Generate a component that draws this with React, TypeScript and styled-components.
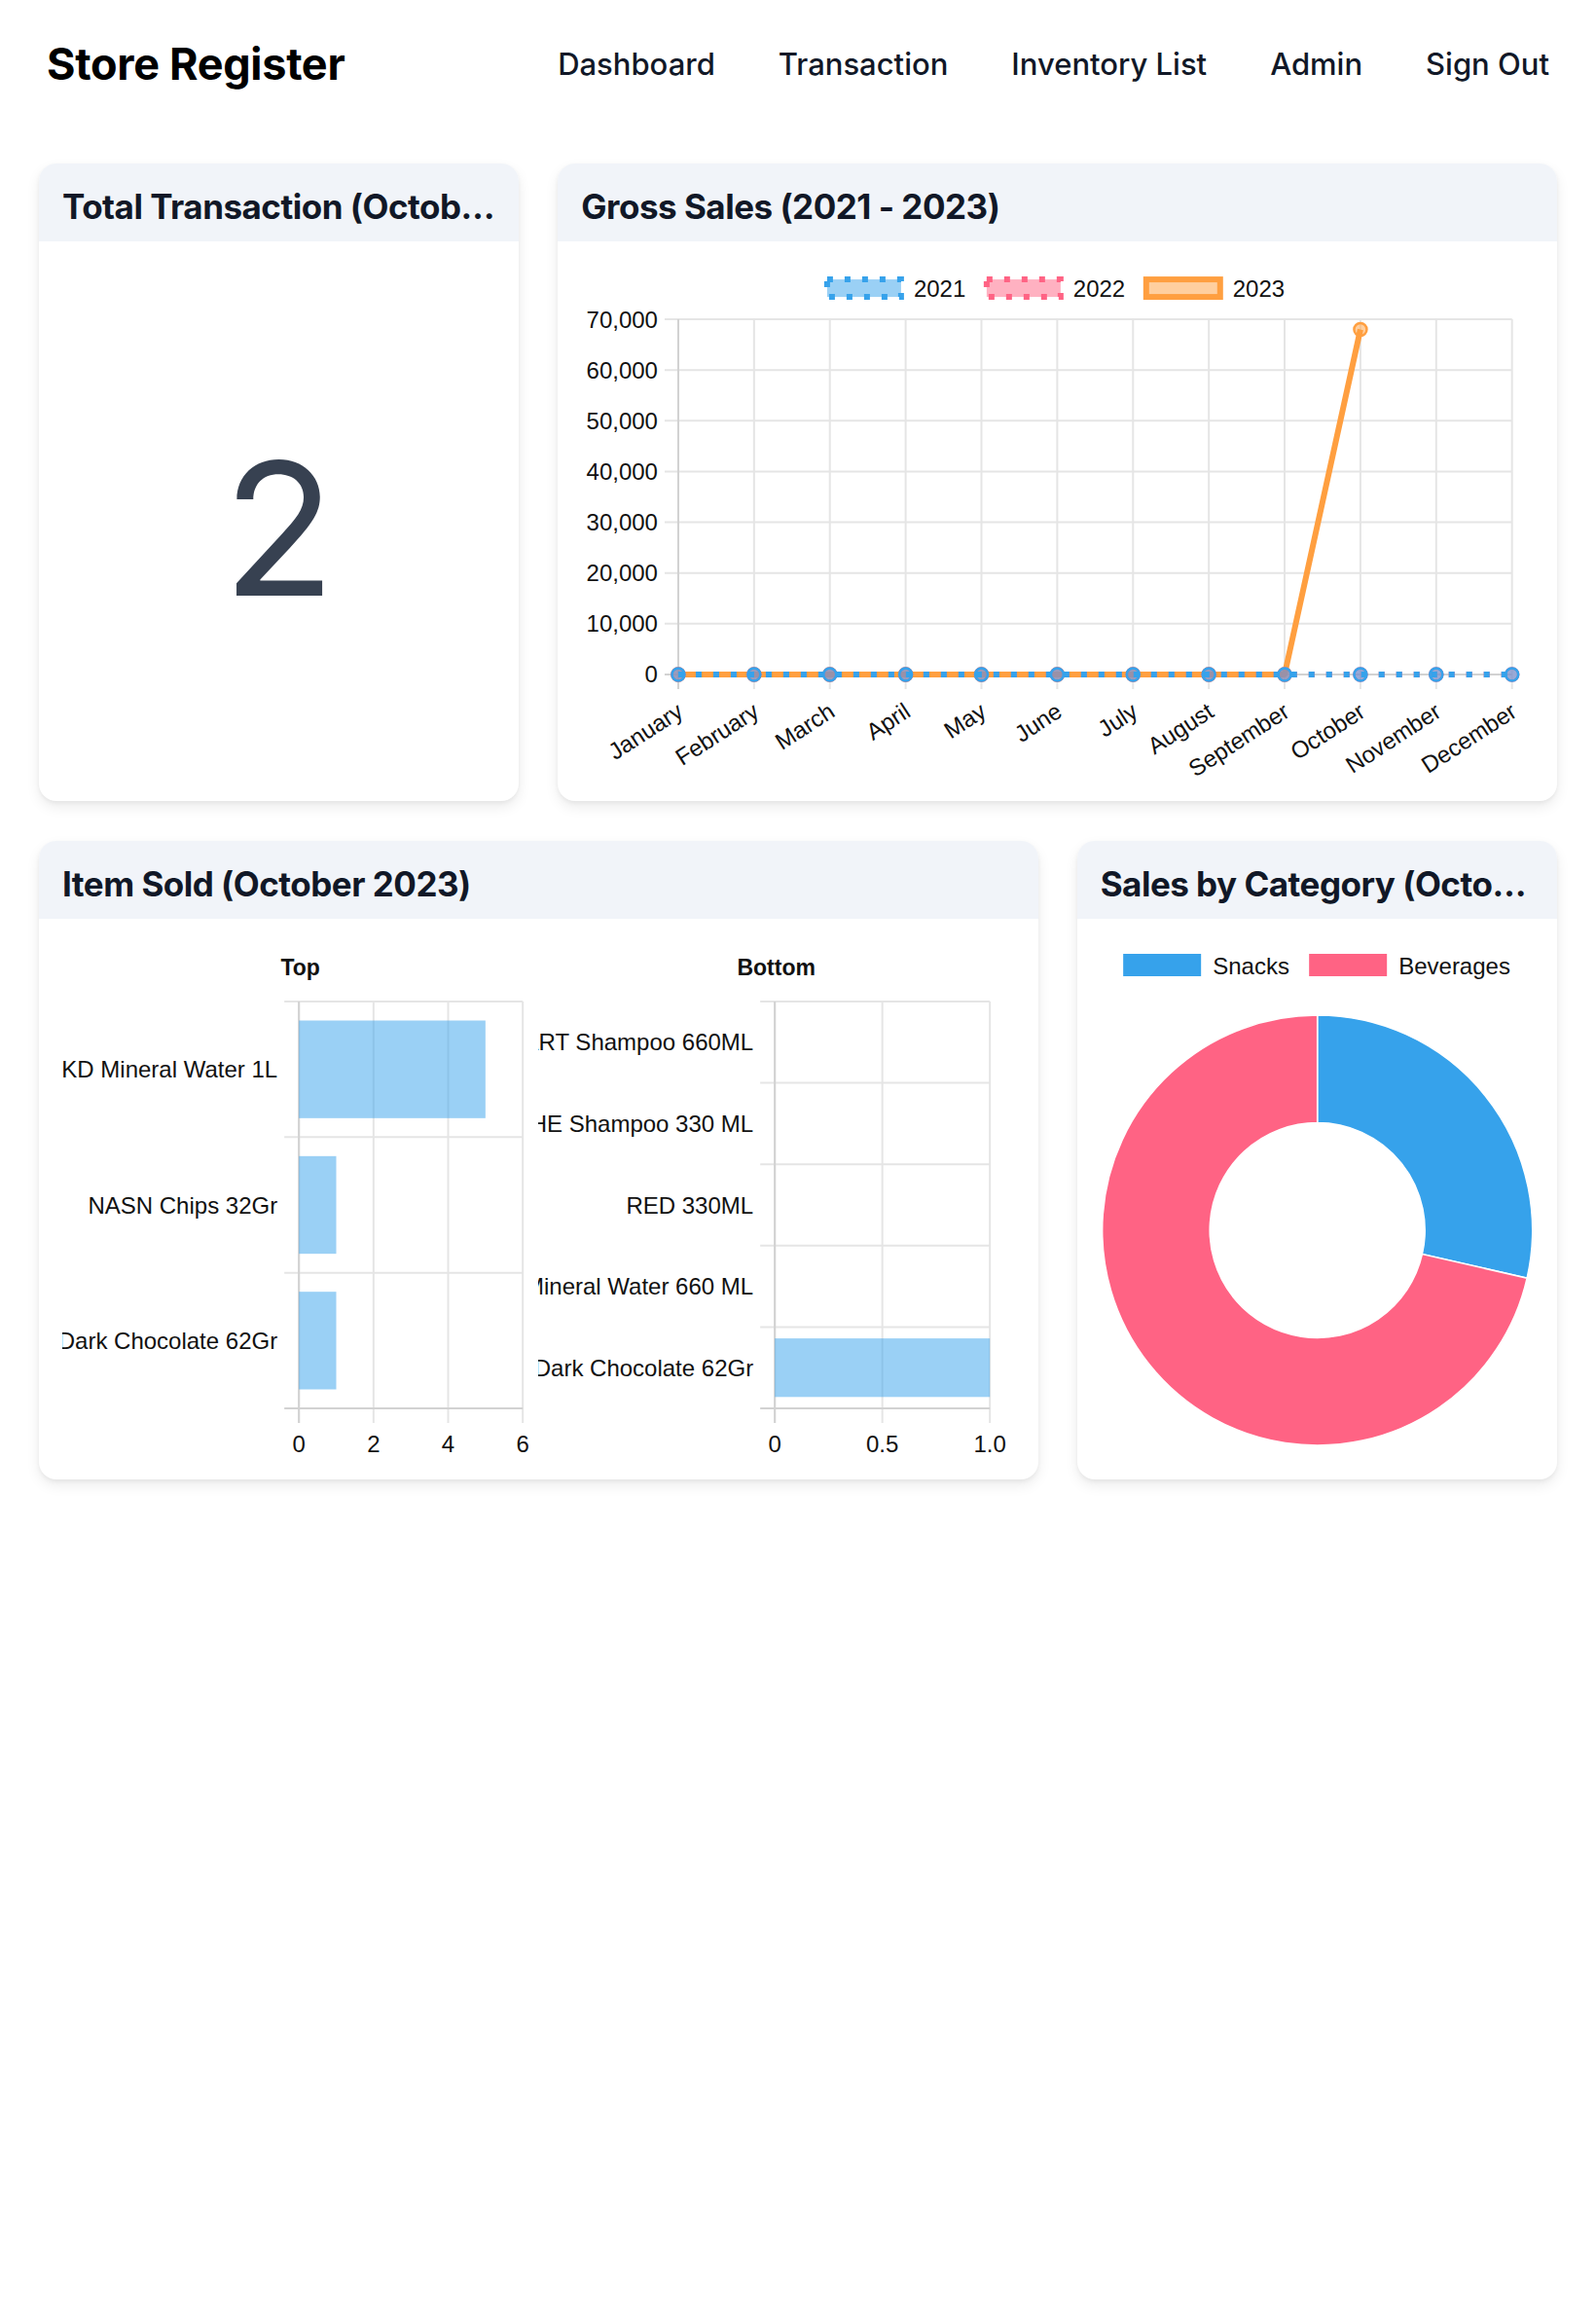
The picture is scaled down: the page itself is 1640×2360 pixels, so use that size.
import React from "react";
import styled, { createGlobalStyle } from "styled-components";

const CHART_FONT = `"Liberation Sans", Arial, Helvetica, sans-serif`;
const TEXT = "#111";
const GRID = "#e5e5e5";
const BORDER = "#d2d2d2";

const BLUE = "#36a2eb";
const BLUE_FILL = "rgba(54,162,235,0.5)";
const PINK = "#ff6384";
const PINK_FILL = "rgba(255,99,132,0.5)";
const ORANGE = "#ff9f40";
const ORANGE_FILL = "rgba(255,159,64,0.5)";

const GlobalStyle = createGlobalStyle`
  html, body {
    margin: 0;
    padding: 0;
    background: #ffffff;
  }
  body {
    font-family: Inter, "Noto Sans", Arial, sans-serif;
    color: #111827;
    -webkit-font-smoothing: antialiased;
  }
`;

const Page = styled.div`
  width: 1640px;
  min-height: 2360px;
  box-sizing: border-box;
`;

const TopBar = styled.header`
  height: 131px;
  padding: 0 48px;
  box-sizing: border-box;
  display: flex;
  align-items: center;
  justify-content: space-between;
`;

const Brand = styled.h1`
  margin: 0;
  font-size: 45px;
  line-height: 54px;
  font-weight: 700;
  letter-spacing: -0.3px;
  color: #000;
`;

const Nav = styled.nav`
  display: flex;
  align-items: center;
  gap: 65px;
`;

const NavLink = styled.a`
  font-size: 31px;
  line-height: 40px;
  font-weight: 500;
  color: #111827;
  text-decoration: none;
`;

const Grid = styled.main`
  display: grid;
  grid-template-columns: repeat(3, minmax(0, 1fr));
  column-gap: 40px;
  row-gap: 41px;
  padding: 37px 40px 0;
`;

const Card = styled.section<{ $span?: number }>`
  grid-column: span ${(p) => p.$span ?? 1};
  background: #fff;
  border-radius: 18px;
  overflow: hidden;
  display: flex;
  flex-direction: column;
  box-shadow: 0 6px 14px rgba(0, 0, 0, 0.08), 0 2px 4px rgba(0, 0, 0, 0.05);
`;

const CardHeader = styled.div`
  height: 80px;
  box-sizing: border-box;
  padding: 20px 24px 12px;
  background: #f1f4f9;
  display: flex;
  align-items: center;
`;

const CardTitle = styled.h2`
  margin: 0;
  min-width: 0;
  font-size: 35px;
  line-height: 48px;
  font-weight: 700;
  letter-spacing: -0.5px;
  color: #111827;
  white-space: nowrap;
  overflow: hidden;
  text-overflow: ellipsis;
`;

const CardBody = styled.div<{ $padX?: number }>`
  flex: 1;
  padding: 0 ${(p) => p.$padX ?? 0}px;
  display: flex;
`;

const CenterBody = styled.div`
  flex: 1;
  display: flex;
  align-items: center;
  justify-content: center;
  padding-top: 14px;
`;

const BigNumber = styled.div`
  font-size: 190px;
  line-height: 1;
  font-weight: 400;
  color: #374151;
`;

const SplitCharts = styled.div`
  flex: 1;
  display: grid;
  grid-template-columns: 1fr 1fr;
`;

const ChartSvg = styled.svg`
  display: block;
  width: 100%;
  font-family: ${CHART_FONT};
  overflow: hidden;
`;

const ChartText = styled.text<{ $bold?: boolean; $size?: number }>`
  font-size: ${(p) => p.$size ?? 24}px;
  font-weight: ${(p) => (p.$bold ? 700 : 400)};
  fill: ${TEXT};
`;

/* ---------------- Line chart ---------------- */

const MONTHS = [
  "January",
  "February",
  "March",
  "April",
  "May",
  "June",
  "July",
  "August",
  "September",
  "October",
  "November",
  "December",
];

type Series = {
  label: string;
  color: string;
  fill: string;
  dash?: string;
  data: (number | null)[];
};

const SERIES: Series[] = [
  { label: "2021", color: BLUE, fill: BLUE_FILL, dash: "6 12", data: Array(12).fill(0) },
  { label: "2022", color: PINK, fill: PINK_FILL, dash: "6 12", data: Array(12).fill(0) },
  {
    label: "2023",
    color: ORANGE,
    fill: ORANGE_FILL,
    data: [0, 0, 0, 0, 0, 0, 0, 0, 0, 68000, null, null],
  },
];

function GrossSalesChart() {
  const W = 1027;
  const H = 575;
  const pL = 124;
  const pR = 981;
  const pT = 80;
  const pB = 445;
  const max = 70000;
  const xAt = (i: number) => pL + (i * (pR - pL)) / 11;
  const yAt = (v: number) => pB - (v / max) * (pB - pT);
  const yTicks = [0, 10000, 20000, 30000, 40000, 50000, 60000, 70000];

  const legendStart = 274;
  const legendStep = 164;

  const drawOrder = [...SERIES].reverse();

  return (
    <ChartSvg viewBox={`0 0 ${W} ${H}`} height={H}>
      {SERIES.map((s, i) => {
        const x = legendStart + i * legendStep;
        return (
          <g key={s.label}>
            <rect
              x={x + 3}
              y={39}
              width={76}
              height={18}
              fill={s.fill}
              stroke={s.color}
              strokeWidth={6}
              strokeDasharray={s.dash}
            />
            <ChartText x={x + 92} y={48} dominantBaseline="central">
              {s.label}
            </ChartText>
          </g>
        );
      })}

      {yTicks.map((t) => (
        <g key={t}>
          <line x1={pL - 14} x2={pR} y1={yAt(t)} y2={yAt(t)} stroke={GRID} strokeWidth={2} />
          <ChartText x={103} y={yAt(t)} textAnchor="end" dominantBaseline="central">
            {t.toLocaleString("en-US")}
          </ChartText>
        </g>
      ))}

      {MONTHS.map((m, i) => (
        <g key={m}>
          <line x1={xAt(i)} x2={xAt(i)} y1={pT} y2={pB + 15} stroke={GRID} strokeWidth={2} />
          <ChartText
            x={xAt(i) + 2}
            y={480}
            textAnchor="end"
            dominantBaseline="central"
            transform={`rotate(-33 ${xAt(i) + 2} 480)`}
          >
            {m}
          </ChartText>
        </g>
      ))}

      <line x1={pL} x2={pL} y1={pT} y2={pB + 15} stroke={BORDER} strokeWidth={2} />
      <line x1={pL - 14} x2={pR} y1={pB} y2={pB} stroke={BORDER} strokeWidth={2} />

      {drawOrder.map((s) => {
        const pts = s.data
          .map((v, i) => (v === null ? null : `${xAt(i)},${yAt(v)}`))
          .filter(Boolean)
          .join(" ");
        return (
          <g key={s.label}>
            <polyline
              points={pts}
              fill="none"
              stroke={s.color}
              strokeWidth={6}
              strokeDasharray={s.dash}
              strokeLinejoin="round"
            />
            {s.data.map((v, i) =>
              v === null ? null : (
                <circle
                  key={i}
                  cx={xAt(i)}
                  cy={yAt(v)}
                  r={6.5}
                  fill={s.fill}
                  stroke={s.color}
                  strokeWidth={2.5}
                />
              )
            )}
          </g>
        );
      })}
    </ChartSvg>
  );
}

/* ---------------- Horizontal bar chart ---------------- */

type BarProps = {
  title: string;
  labels: string[];
  values: number[];
  max: number;
  ticks: { v: number; label: string }[];
  plotR: number;
};

function HBarChart({ title, labels, values, max, ticks, plotR }: BarProps) {
  const W = 489;
  const H = 576;
  const pL = 243;
  const pT = 85;
  const pB = 503;
  const band = (pB - pT) / labels.length;
  const barH = band * 0.72;
  const xv = (v: number) => pL + (v / max) * (plotR - pL);

  return (
    <ChartSvg viewBox={`0 0 ${W} ${H}`} height={H}>
      <ChartText x={W / 2} y={50} textAnchor="middle" dominantBaseline="central" $bold $size={23}>
        {title}
      </ChartText>

      {ticks.map((t) => (
        <g key={t.label}>
          <line x1={xv(t.v)} x2={xv(t.v)} y1={pT} y2={pB + 15} stroke={GRID} strokeWidth={2} />
          <ChartText x={xv(t.v)} y={539} textAnchor="middle" dominantBaseline="central">
            {t.label}
          </ChartText>
        </g>
      ))}

      {labels.map((_, i) => (
        <line
          key={`h${i}`}
          x1={pL - 15}
          x2={plotR}
          y1={pT + i * band}
          y2={pT + i * band}
          stroke={GRID}
          strokeWidth={2}
        />
      ))}

      <line x1={pL} x2={pL} y1={pT} y2={pB + 15} stroke={BORDER} strokeWidth={2} />
      <line x1={pL - 15} x2={plotR} y1={pB} y2={pB} stroke={BORDER} strokeWidth={2} />

      {values.map((v, i) =>
        v > 0 ? (
          <rect
            key={`b${i}`}
            x={pL}
            y={pT + i * band + (band - barH) / 2}
            width={xv(v) - pL}
            height={barH}
            fill={BLUE_FILL}
          />
        ) : null
      )}

      {labels.map((l, i) => (
        <ChartText
          key={`l${i}`}
          x={pL - 22}
          y={pT + i * band + band / 2}
          textAnchor="end"
          dominantBaseline="central"
        >
          {l}
        </ChartText>
      ))}
    </ChartSvg>
  );
}

/* ---------------- Doughnut ---------------- */

function arcPath(cx: number, cy: number, R: number, r: number, a0: number, a1: number) {
  const rad = (d: number) => (d * Math.PI) / 180;
  const p = (rr: number, a: number) => [cx + rr * Math.sin(rad(a)), cy - rr * Math.cos(rad(a))];
  const large = a1 - a0 > 180 ? 1 : 0;
  const [x0, y0] = p(R, a0);
  const [x1, y1] = p(R, a1);
  const [x2, y2] = p(r, a1);
  const [x3, y3] = p(r, a0);
  return `M ${x0} ${y0} A ${R} ${R} 0 ${large} 1 ${x1} ${y1} L ${x2} ${y2} A ${r} ${r} 0 ${large} 0 ${x3} ${y3} Z`;
}

const CATEGORIES = [
  { label: "Snacks", value: 2, color: BLUE, legendX: 47 },
  { label: "Beverages", value: 5, color: PINK, legendX: 238 },
];

function CategoryChart() {
  const W = 493;
  const H = 576;
  const cx = 246.5;
  const cy = 320;
  const R = 221;
  const r = 110.5;
  const total = CATEGORIES.reduce((s, c) => s + c.value, 0);
  let acc = 0;

  return (
    <ChartSvg viewBox={`0 0 ${W} ${H}`} height={H}>
      {CATEGORIES.map((c) => (
        <g key={c.label}>
          <rect x={c.legendX} y={36} width={80} height={23} fill={c.color} />
          <ChartText x={c.legendX + 92} y={48} dominantBaseline="central">
            {c.label}
          </ChartText>
        </g>
      ))}
      {CATEGORIES.map((c) => {
        const a0 = (acc / total) * 360;
        acc += c.value;
        const a1 = (acc / total) * 360;
        return (
          <path
            key={c.label}
            d={arcPath(cx, cy, R, r, a0, a1)}
            fill={c.color}
            stroke="#fff"
            strokeWidth={1.5}
          />
        );
      })}
    </ChartSvg>
  );
}

/* ---------------- App ---------------- */

export default function App() {
  return (
    <Page>
      <GlobalStyle />
      <TopBar>
        <Brand>Store Register</Brand>
        <Nav>
          <NavLink href="#">Dashboard</NavLink>
          <NavLink href="#">Transaction</NavLink>
          <NavLink href="#">Inventory List</NavLink>
          <NavLink href="#">Admin</NavLink>
          <NavLink href="#">Sign Out</NavLink>
        </Nav>
      </TopBar>

      <Grid>
        <Card>
          <CardHeader>
            <CardTitle>Total Transaction (October 2023)</CardTitle>
          </CardHeader>
          <CardBody>
            <CenterBody>
              <BigNumber>2</BigNumber>
            </CenterBody>
          </CardBody>
        </Card>

        <Card $span={2}>
          <CardHeader>
            <CardTitle>Gross Sales (2021 - 2023)</CardTitle>
          </CardHeader>
          <CardBody>
            <GrossSalesChart />
          </CardBody>
        </Card>

        <Card $span={2}>
          <CardHeader>
            <CardTitle>Item Sold (October 2023)</CardTitle>
          </CardHeader>
          <CardBody $padX={24}>
            <SplitCharts>
              <HBarChart
                title="Top"
                labels={["OKD Mineral Water 1L", "NASN Chips 32Gr", "SILVERQUEEN Dark Chocolate 62Gr"]}
                values={[5, 1, 1]}
                max={6}
                plotR={473}
                ticks={[
                  { v: 0, label: "0" },
                  { v: 2, label: "2" },
                  { v: 4, label: "4" },
                  { v: 6, label: "6" },
                ]}
              />
              <HBarChart
                title="Bottom"
                labels={[
                  "SMART Shampoo 660ML",
                  "DOVE THE Shampoo 330 ML",
                  "RED 330ML",
                  "CLEO Mineral Water 660 ML",
                  "SILVERQUEEN Dark Chocolate 62Gr",
                ]}
                values={[0, 0, 0, 0, 1]}
                max={1}
                plotR={464}
                ticks={[
                  { v: 0, label: "0" },
                  { v: 0.5, label: "0.5" },
                  { v: 1, label: "1.0" },
                ]}
              />
            </SplitCharts>
          </CardBody>
        </Card>

        <Card>
          <CardHeader>
            <CardTitle>Sales by Category (October 2023)</CardTitle>
          </CardHeader>
          <CardBody>
            <CategoryChart />
          </CardBody>
        </Card>
      </Grid>
    </Page>
  );
}
